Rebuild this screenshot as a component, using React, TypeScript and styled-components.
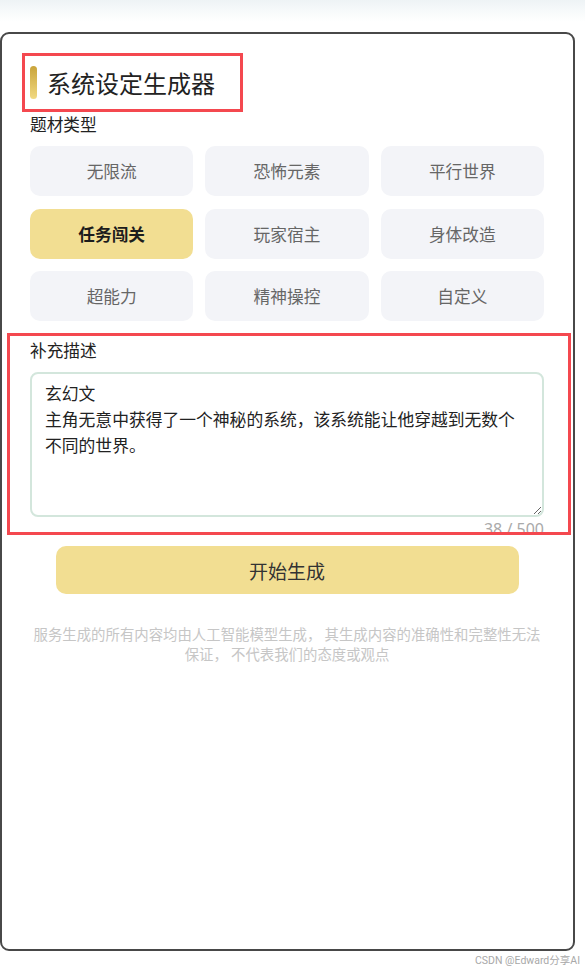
import React from "react";
import styled, { createGlobalStyle } from "styled-components";

const Global = createGlobalStyle`
  html, body { margin: 0; padding: 0; background: #fff; }
  body { font-family: "Noto Sans CJK SC", "Noto Sans", sans-serif; }
  * { box-sizing: border-box; }
`;

const Page = styled.div`
  width: 585px;
  height: 972px;
  background: linear-gradient(#eef3f5 0px, #f6f9fa 10px, #ffffff 22px);
  padding-top: 32px;
  display: flex;
  flex-direction: column;
`;

const Card = styled.div`
  width: 575px;
  height: 919px;
  border: 2px solid #484848;
  border-radius: 9px;
  background: #fff;
  padding: 19px 29px 0 28px;
  display: flex;
  flex-direction: column;
`;

const TitleBox = styled.div`
  width: 221px;
  height: 59px;
  margin-left: -8px;
  border: 3px solid #f4484f;
  display: flex;
  align-items: center;
  padding-left: 5px;
  gap: 10px;
`;

const Bar = styled.span`
  width: 7px;
  height: 33px;
  border-radius: 4px;
  background: linear-gradient(#c9a43a, #f1d982);
`;

const Title = styled.h1`
  margin: 0;
  font-size: 24px;
  font-weight: 400;
  color: #222;
  line-height: 32px;
`;

const Label = styled.div<{ $mt?: number }>`
  font-size: 16.7px;
  line-height: 22px;
  color: #222;
  margin-top: ${(p) => p.$mt ?? 0}px;
`;

const Grid = styled.div`
  margin-top: 11px;
  display: grid;
  grid-template-columns: repeat(3, 1fr);
  grid-auto-rows: 50px;
  column-gap: 12px;
  row-gap: 12.5px;
`;

const Chip = styled.button<{ $active?: boolean }>`
  border: none;
  border-radius: 10px;
  background: ${(p) => (p.$active ? "#f2de92" : "#f3f4f8")};
  color: ${(p) => (p.$active ? "#1c1c1c" : "#666")};
  font-family: inherit;
  font-size: 16.7px;
  font-weight: ${(p) => (p.$active ? 700 : 400)};
  display: flex;
  align-items: center;
  justify-content: center;
  padding: 0;
`;

const Section = styled.div`
  position: relative;
  margin: 12px -27px 0 -23px;
  height: 202px;
  padding: 6px 27px 0 23px;
  display: flex;
  flex-direction: column;
  flex-shrink: 0;
  & > * { flex-shrink: 0; }
  &::after {
    content: "";
    position: absolute;
    inset: 0;
    border: 3px solid #f4484f;
    pointer-events: none;
  }
`;

const TextArea = styled.textarea`
  margin-top: 11px;
  width: 514px;
  height: 145px;
  border: 2px solid #d3e6dc;
  border-radius: 8px;
  padding: 6px 13px;
  font-family: "Noto Sans CJK SC", sans-serif;
  font-size: 16.8px;
  line-height: 26px;
  color: #222;
  resize: vertical;
  outline: none;
  overflow: hidden;
`;

const Counter = styled.div`
  margin-top: 2px;
  text-align: right;
  font-family: "Noto Sans", sans-serif;
  font-size: 16px;
  line-height: 20px;
  color: #aaa;
`;

const Submit = styled.button`
  align-self: center;
  margin-top: 11px;
  width: 463px;
  height: 48px;
  flex-shrink: 0;
  border: none;
  border-radius: 10px;
  background: #f2de92;
  color: #333;
  font-family: inherit;
  font-size: 19px;
`;

const Disclaimer = styled.p`
  margin: 30px 0 0;
  text-align: center;
  font-size: 14.4px;
  line-height: 20px;
  color: #c6c6c6;
  white-space: pre-wrap;
`;

const Watermark = styled.div`
  margin-top: 3px;
  padding-right: 5px;
  text-align: right;
  font-family: "Roboto", "Noto Sans CJK SC", sans-serif;
  font-size: 10.5px;
  line-height: 14px;
  color: #a8a8a8;
`;

const chips = [
  "无限流",
  "恐怖元素",
  "平行世界",
  "任务闯关",
  "玩家宿主",
  "身体改造",
  "超能力",
  "精神操控",
  "自定义",
];

const initial = "玄幻文\n主角无意中获得了一个神秘的系统，该系统能让他穿越到无数个不同的世界。";

export default function App() {
  return (
    <>
      <Global />
      <Page>
        <Card>
          <TitleBox>
            <Bar />
            <Title>系统设定生成器</Title>
          </TitleBox>
          <Label $mt={1}>题材类型</Label>
          <Grid>
            {chips.map((c) => (
              <Chip key={c} $active={c === "任务闯关"}>
                {c}
              </Chip>
            ))}
          </Grid>
          <Section>
            <Label>补充描述</Label>
            <TextArea defaultValue={initial} />
            <Counter>38 / 500</Counter>
          </Section>
          <Submit>开始生成</Submit>
          <Disclaimer>
            服务生成的所有内容均由人工智能模型生成， 其生成内容的准确性和完整性无法保证， 不代表我们的态度或观点
          </Disclaimer>
        </Card>
        <Watermark>CSDN @Edward分享AI</Watermark>
      </Page>
    </>
  );
}
